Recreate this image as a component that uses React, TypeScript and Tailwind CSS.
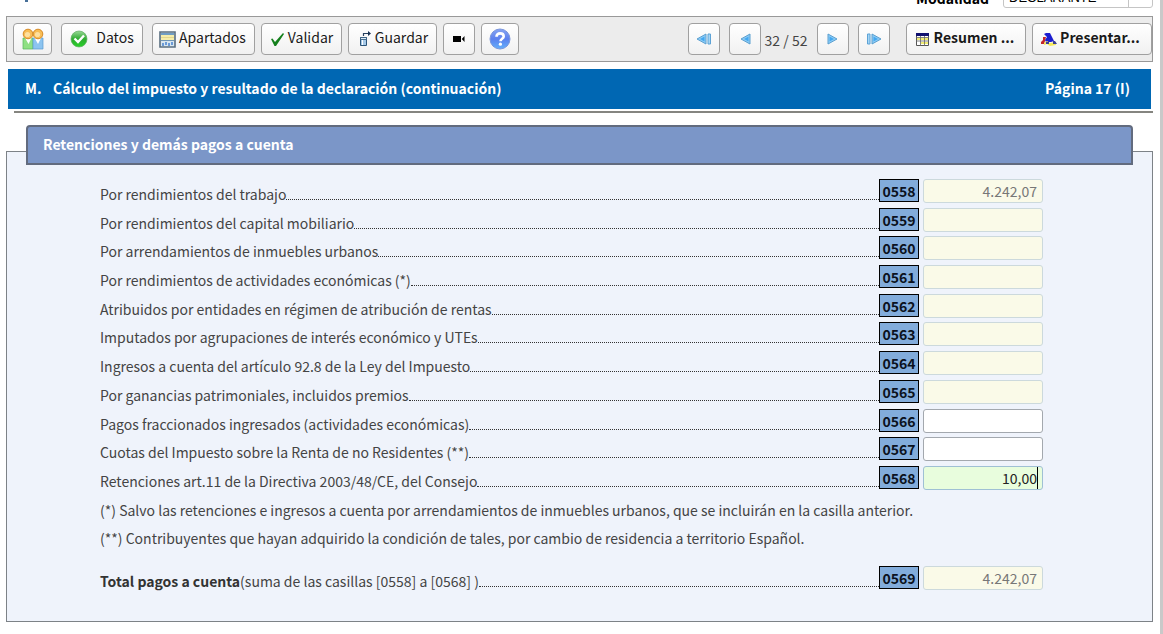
import React, { ReactNode } from "react";

type RowData = {
  code: string;
  label: ReactNode;
  value?: string;
  kind?: "readonly" | "editable" | "focused";
};

const rows: RowData[] = [
  { code: "0558", label: "Por rendimientos del trabajo", value: "4.242,07" },
  { code: "0559", label: "Por rendimientos del capital mobiliario" },
  { code: "0560", label: "Por arrendamientos de inmuebles urbanos" },
  { code: "0561", label: "Por rendimientos de actividades económicas (*)" },
  { code: "0562", label: "Atribuidos por entidades en régimen de atribución de rentas" },
  { code: "0563", label: "Imputados por agrupaciones de interés económico y UTEs" },
  { code: "0564", label: "Ingresos a cuenta del artículo 92.8 de la Ley del Impuesto" },
  { code: "0565", label: "Por ganancias patrimoniales, incluidos premios" },
  { code: "0566", label: "Pagos fraccionados ingresados (actividades económicas)", kind: "editable" },
  { code: "0567", label: "Cuotas del Impuesto sobre la Renta de no Residentes (**)", kind: "editable" },
  { code: "0568", label: "Retenciones art.11 de la Directiva 2003/48/CE, del Consejo", value: "10,00", kind: "focused" },
];

const fieldStyles = {
  readonly: "border-[#ccd9dc] bg-[#fafae8] text-[#777]",
  editable: "border-[#a3a8ae] bg-white text-[#222]",
  focused: "border-[#9fc0d4] bg-[#e8fddd] text-[#222]",
};

function Row({ code, label, value = "", kind = "readonly" }: RowData) {
  return (
    <div className="flex items-start">
      <label htmlFor={`casilla-${code}`} className="pt-[3px] leading-6 whitespace-nowrap">
        {label}
      </label>
      <span className="h-[21px] flex-1 border-b border-dotted border-[#333]" />
      <span className="h-[23px] w-10 border border-black bg-[#82acdb] text-center font-bold leading-[23px] text-[#0b1220]">
        {code}
      </span>
      <span className="relative ml-1 flex">
        <input
          id={`casilla-${code}`}
          type="text"
          defaultValue={value}
          readOnly={kind === "readonly"}
          className={`h-6 w-[120px] rounded-[3px] border px-[5px] text-right outline-none ${fieldStyles[kind]}`}
        />
        {kind === "focused" && <span className="absolute top-px right-[5px] h-[22px] w-px bg-black" />}
      </span>
    </div>
  );
}

type ToolButtonProps = { className: string; label?: string; icon: ReactNode; text?: string };

function ToolButton({ className, label, icon, text }: ToolButtonProps) {
  return (
    <button
      type="button"
      aria-label={label}
      className={`flex h-8 shrink-0 items-center justify-center rounded-[4px] border border-[#a0a0a0] bg-linear-to-b from-white to-[#f1f1f1] whitespace-nowrap text-[#1a1a1a] ${className}`}
    >
      {icon}
      {text && <span className="pb-1">{text}</span>}
    </button>
  );
}

function PeopleIcon() {
  return (
    <svg width="22" height="22" viewBox="0 0 22 22">
      <path d="M1 10h10v11H1z" fill="#8fe084" stroke="#55b65a" strokeWidth=".7" />
      <path d="M11 10h10v11H11z" fill="#8cc4f0" stroke="#5a9bd0" strokeWidth=".7" />
      <path d="M2.5 9h7.5l-3.5 7zM12 9h7.5L16 16z" fill="#fff" />
      <circle cx="6" cy="6" r="4.8" fill="#f8bd55" stroke="#d68a25" />
      <circle cx="16" cy="6" r="4.8" fill="#f8bd55" stroke="#d68a25" />
      <circle cx="5.5" cy="6.5" r="2.6" fill="#fde0a0" />
      <circle cx="15.5" cy="6.5" r="2.6" fill="#fde0a0" />
    </svg>
  );
}

function OkIcon() {
  return (
    <svg width="18" height="18" viewBox="0 0 18 18">
      <defs>
        <linearGradient id="ok" x1="0" y1="0" x2="0" y2="1">
          <stop offset="0" stopColor="#9ad897" />
          <stop offset=".5" stopColor="#2eab30" />
          <stop offset="1" stopColor="#29d329" />
        </linearGradient>
      </defs>
      <circle cx="9" cy="9" r="8" fill="url(#ok)" stroke="#5fae62" strokeWidth=".7" />
      <path d="M4.5 8.5l3.5 3.5 6-6.5" fill="none" stroke="#fff" strokeWidth="2.4" />
    </svg>
  );
}

function SectionsIcon() {
  return (
    <svg width="17" height="17" viewBox="0 0 17 17">
      <path d="M1 1h15v15H1z" fill="#d8e6ef" stroke="#5a6f80" strokeWidth="1.6" />
      <path d="M2 2h13v2H2z" fill="#6f9dc4" />
      <path d="M2 4h13v5H2z" fill="#f5edaa" />
      <path d="M2 6.5h13" stroke="#e2d68c" />
      <path d="M2 9.5h13" stroke="#7196b5" />
      <path d="M3 12h2v3H3zM6 11h2v3H6zM9 12h2v3H9zM12 11h2v3h-2z" fill="#6b9bd8" />
    </svg>
  );
}

function CheckIcon() {
  return (
    <svg width="15" height="15" viewBox="0 0 15 15">
      <path d="M1 7l1.5-.5L5 10 13 1l1 1-8 12H4.5z" fill="#15801d" />
    </svg>
  );
}

function SaveIcon() {
  return (
    <svg width="14" height="16" viewBox="0 0 14 16">
      <path d="M1.5 6.5h6v8h-6z" fill="#a6c9e8" stroke="#2d5579" />
      <path d="M1.5 6.5h6v2h-6z" fill="#dcebf7" stroke="#2d5579" strokeWidth=".8" />
      <path d="M3.5 9v5" stroke="#fff" />
      <path d="M4.5 5V2.5H10" fill="none" stroke="#28415f" strokeWidth="1.2" />
      <path d="M9 0l3 2.5L9 5z" fill="#162f50" />
    </svg>
  );
}

function CameraIcon() {
  return (
    <svg width="12" height="8" viewBox="0 0 12 8">
      <path d="M0 1h8v6H0zM11.5 1v6L8.8 4z" fill="#000" />
    </svg>
  );
}

function HelpIcon() {
  return (
    <svg width="22" height="22" viewBox="0 0 22 22">
      <defs>
        <linearGradient id="help" x1="0" y1="0" x2="0" y2="1">
          <stop offset="0" stopColor="#86a4f2" />
          <stop offset=".5" stopColor="#5c80ee" />
          <stop offset="1" stopColor="#63b0fb" />
        </linearGradient>
      </defs>
      <circle cx="11" cy="11" r="10" fill="url(#help)" stroke="#7b96dc" />
      <path d="M7.5 8.7c0-2 1.5-3.3 3.6-3.3s3.6 1.1 3.6 3c0 2.4-3.2 2.4-3.2 4.8" fill="none" stroke="#fff" strokeWidth="2.6" />
      <circle cx="11.4" cy="16.2" r="1.6" fill="#fff" />
    </svg>
  );
}

function ArrowIcon({ flip = false, bar = false }: { flip?: boolean; bar?: boolean }) {
  return (
    <svg width="16" height="12" viewBox="0 0 16 12">
      <g transform={flip ? "matrix(-1 0 0 1 16 0)" : undefined}>
        <path d={bar ? "M10 1v10L1 6z" : "M13 1v10L4 6z"} fill="#8fcdf5" stroke="#5a9fd0" />
        <path d={bar ? "M8.5 3.5v5L4 6z" : "M11.5 3.5v5L7 6z"} fill="#43a8f1" />
        {bar && <path d="M12 1h2.5v10H12z" fill="#a3d5f5" stroke="#5da3d6" />}
      </g>
    </svg>
  );
}

function TableIcon() {
  return (
    <svg width="13" height="13" viewBox="0 0 13 13">
      <path d="M.5.5h12v12H.5z" fill="#fff" stroke="#555" />
      <path d="M0 0h13v3H0z" fill="#101070" />
      <path d="M1 5h11v2H1zM5 9h7v2H5z" fill="#f1ec72" />
      <path d="M0 4.5h13M0 8h13M4.5 3v10M8.5 3v10" stroke="#666" strokeWidth=".8" />
    </svg>
  );
}

function SubmitIcon() {
  return (
    <svg width="16" height="13" viewBox="0 0 16 13">
      <path d="M2 4h3L4 8l-1 3H0V9l2-2z" fill="#c4242a" />
      <path d="M3 1l2-1h4l2 4 2 4-3 1H5L4 7l2-3z" fill="#1b1dd0" />
      <path d="M3 10l3-2 3 2 6-1v3l-6 1-3-2-3 1z" fill="#f4e858" />
      <path d="M12 8h2l2 3h-4zM5 9h3v2H5z" fill="#3a3f96" />
    </svg>
  );
}

export default function App() {
  return (
    <div className="min-h-screen border-r-[3px] border-[#c9c9c9] bg-white pr-[7px] pb-3 pl-[6px] font-['Noto_Sans_CJK_SC','Noto_Sans',sans-serif] text-sm text-[#444]">
      <header className="flex h-2 items-end justify-end overflow-hidden">
        <span className="mr-auto ml-[19px] h-[2px] w-[3px] self-start bg-[#477099]" />
        <label htmlFor="modalidad" className="mr-[14px] font-bold leading-5 text-black">
          Modalidad
        </label>
        <span className="relative flex">
          <select
            id="modalidad"
            className="h-6 w-[150px] appearance-none rounded-[3px] border border-[#c5c5c5] bg-white pt-1 pl-[5px] font-['Liberation_Sans',sans-serif] text-[13px] leading-4 text-black"
          >
            <option>DECLARANTE</option>
          </select>
          <span className="pointer-events-none absolute inset-y-0 right-6 w-px bg-[#c5c5c5]" />
        </span>
      </header>

      <div role="toolbar" className="mt-2 flex h-[46px] items-center border border-[#999] bg-[#ececec] pl-[6px]">
        <ToolButton className="w-[39px]" label="Declarantes" icon={<PeopleIcon />} />
        <ToolButton className="ml-[9px] w-[82px] gap-2" icon={<OkIcon />} text="Datos" />
        <ToolButton className="ml-[9px] w-[103px] gap-[3px] pr-[2px]" icon={<SectionsIcon />} text="Apartados" />
        <ToolButton className="ml-[6px] w-[81px] gap-[3px]" icon={<CheckIcon />} text="Validar" />
        <ToolButton className="ml-[6px] w-[89px] gap-[2px] pl-[2px]" icon={<SaveIcon />} text="Guardar" />
        <ToolButton className="ml-[6px] w-8" label="Vídeo" icon={<CameraIcon />} />
        <ToolButton className="ml-[6px] w-[38px]" label="Ayuda" icon={<HelpIcon />} />
        <nav className="ml-auto flex items-center">
          <ToolButton className="w-8" label="Primera página" icon={<ArrowIcon bar />} />
          <ToolButton className="ml-[9px] w-8" label="Página anterior" icon={<ArrowIcon />} />
          <span className="w-14 pt-[2px] pr-[6px] text-center whitespace-nowrap">32 / 52</span>
          <ToolButton className="w-8" label="Página siguiente" icon={<ArrowIcon flip />} />
          <ToolButton className="ml-[9px] w-8" label="Última página" icon={<ArrowIcon flip bar />} />
        </nav>
        <ToolButton className="ml-4 w-[120px] gap-[5px] pr-[2px] font-bold" icon={<TableIcon />} text="Resumen ..." />
        <ToolButton className="ml-[6px] w-[120px] gap-[3px] pr-[3px] font-bold" icon={<SubmitIcon />} text="Presentar..." />
      </div>

      <main>
        <h1 className="mx-[2px] mt-[7px] flex h-10 items-center bg-[#0067b3] pr-[21px] pb-[2px] pl-[17px] font-bold text-white">
          <span className="w-7">M.</span>
          <span>Cálculo del impuesto y resultado de la declaración (continuación)</span>
          <span className="ml-auto">Página 17 (I)</span>
        </h1>
        <div role="separator" className="mt-[2px] ml-2 h-[2px] bg-[#858580]" />

        <section className="mt-[38px] border border-[#7d8287] bg-[#eff3fb] pb-7">
          <h2 className="-mt-[27px] mr-[19px] ml-[19px] flex h-10 items-center rounded-t-[4px] border-2 border-[#626b7e] bg-[#7b96c8] pb-[2px] pl-[15px] font-bold text-white">
            Retenciones y demás pagos a cuenta
          </h2>
          <form className="mt-[14px] mr-[109px] ml-[93px]">
            <div className="grid min-h-[373px] auto-rows-fr">
              {rows.map((row) => (
                <Row key={row.code} {...row} />
              ))}
              <p className="pt-[3px] leading-6">
                (*) Salvo las retenciones e ingresos a cuenta por arrendamientos de inmuebles urbanos, que se incluirán en la casilla anterior.
              </p>
              <p className="pt-[3px] leading-6">
                (**) Contribuyentes que hayan adquirido la condición de tales, por cambio de residencia a territorio Español.
              </p>
            </div>
            <div className="mt-[14px]">
              <Row
                code="0569"
                label={<><b className="text-[#333]">Total pagos a cuenta</b>(suma de las casillas [0558] a [0568] )</>}
                value="4.242,07"
              />
            </div>
          </form>
        </section>
      </main>
    </div>
  );
}
